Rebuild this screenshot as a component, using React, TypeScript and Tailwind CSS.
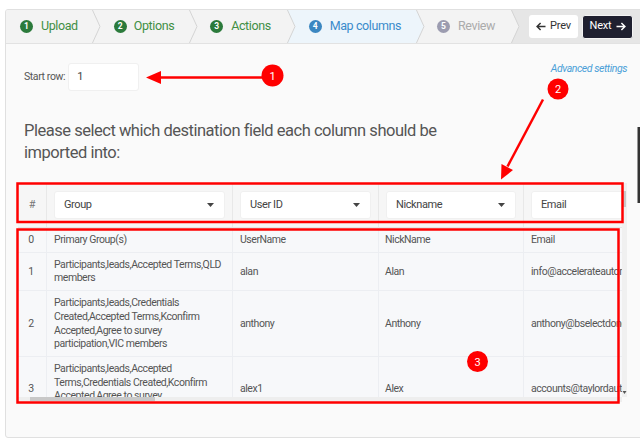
import React from 'react';

const Sep = ({ left, right }: { left: string; right: string }) => (
  <svg width="9" height="33" viewBox="0 0 9 33" className="block shrink-0">
    <rect x="0" y="0" width="9" height="33" fill={right} />
    <polygon points="0,0 8,16.5 0,33" fill={left} />
    <polyline points="0,-1 8,16.5 0,34" fill="none" stroke="#d4d4d4" strokeWidth="1" />
  </svg>
);

const Caret = () => (
  <svg width="7" height="4" viewBox="0 0 7 4" className="ml-auto block">
    <polygon points="0,0 7,0 3.5,4" fill="#444" />
  </svg>
);

const ArrowLeft = ({ color }: { color: string }) => (
  <svg width="10" height="9" viewBox="0 0 10 9" className="block">
    <path d="M9.5 4.5H1.2M4.6 1 1.1 4.5 4.6 8" fill="none" stroke={color} strokeWidth="1.5" />
  </svg>
);

const ArrowRight = ({ color }: { color: string }) => (
  <svg width="10" height="9" viewBox="0 0 10 9" className="block">
    <path d="M0.5 4.5H8.8M5.4 1 8.9 4.5 5.4 8" fill="none" stroke={color} strokeWidth="1.5" />
  </svg>
);

type Row = { n: string; g: string[]; u: string; nk: string; e: string };

const rows: Row[] = [
  { n: '0', g: ['Primary Group(s)'], u: 'UserName', nk: 'NickName', e: 'Email' },
  { n: '1', g: ['Participants,leads,Accepted Terms,QLD', 'members'], u: 'alan', nk: 'Alan', e: 'info@accelerateautomotive.com.au' },
  {
    n: '2',
    g: ['Participants,leads,Credentials', 'Created,Accepted Terms,Kconfirm', 'Accepted,Agree to survey', 'participation,VIC members'],
    u: 'anthony',
    nk: 'Anthony',
    e: 'anthony@bselectdoncaster.com.au',
  },
  {
    n: '3',
    g: ['Participants,leads,Accepted', 'Terms,Credentials Created,Kconfirm', 'Accepted,Agree to survey', 'participation,NSW members'],
    u: 'alex1',
    nk: 'Alex',
    e: 'accounts@taylordautomotive.com.au',
  },
];

export default function App() {
  return (
    <div className="relative h-[442px] w-[640px] overflow-hidden bg-white font-['Roboto',sans-serif]">
      <div className="ml-[5px] mt-[9px] flex h-[429px] w-[680px] flex-col overflow-hidden rounded-[3px] border border-[#e0e0e0] bg-[#fafafa]">
        {/* Steps bar */}
        <div className="flex h-[34px] shrink-0 border-b border-[#e2e2e2] bg-[#f3f3f3] text-[12.5px] tracking-[-0.4px]">
          <div className="flex h-[33px] items-center gap-[8px] pl-[14px] pr-[14px]">
            <span className="flex h-[13px] w-[13px] items-center justify-center rounded-full bg-[#2b7a3b] text-[8.5px] font-bold tracking-normal text-white">1</span>
            <span className="text-[#3f8f45]">Upload</span>
          </div>
          <Sep left="#f3f3f3" right="#f3f3f3" />
          <div className="flex h-[33px] items-center gap-[7px] pl-[13px] pr-[15px]">
            <span className="flex h-[13px] w-[13px] items-center justify-center rounded-full bg-[#2b7a3b] text-[8.5px] font-bold tracking-normal text-white">2</span>
            <span className="text-[#3f8f45]">Options</span>
          </div>
          <Sep left="#f3f3f3" right="#f3f3f3" />
          <div className="flex h-[33px] items-center gap-[8px] pl-[12px] pr-[16px]">
            <span className="flex h-[13px] w-[13px] items-center justify-center rounded-full bg-[#2b7a3b] text-[8.5px] font-bold tracking-normal text-white">3</span>
            <span className="text-[#3f8f45]">Actions</span>
          </div>
          <Sep left="#f3f3f3" right="#edf5fb" />
          <div className="flex h-[33px] items-center gap-[8px] bg-[#edf5fb] pl-[13px] pr-[15px]">
            <span className="flex h-[13px] w-[13px] items-center justify-center rounded-full bg-[#3b87c1] text-[8.5px] font-bold tracking-normal text-white">4</span>
            <span className="text-[#3a8bcb]">Map columns</span>
          </div>
          <Sep left="#edf5fb" right="#f3f3f3" />
          <div className="flex h-[33px] items-center gap-[8px] pl-[12px] pr-[16px]">
            <span className="flex h-[13px] w-[13px] items-center justify-center rounded-full bg-[#9c9cb0] text-[8.5px] font-bold tracking-normal text-white">5</span>
            <span className="text-[#ababab]">Review</span>
          </div>
          <Sep left="#f3f3f3" right="#e6e6e6" />
          <div className="flex h-[33px] flex-1 items-center gap-[4px] bg-[#e6e6e6] pl-[9px] tracking-[-0.2px]">
            <button className="flex h-[23px] w-[49px] items-center justify-center gap-[4px] rounded-[3px] bg-white text-[11px] text-[#333]">
              <ArrowLeft color="#333" />
              Prev
            </button>
            <button className="flex h-[24px] w-[51px] items-center justify-center gap-[4px] rounded-[3px] border border-[#f4f4f4] bg-[#1f2030] text-[11px] text-white">
              Next
              <ArrowRight color="#fff" />
            </button>
          </div>
        </div>

        {/* Body */}
        <div className="flex w-[621px] flex-col pl-[12px] pt-[19px]">
          <div className="flex items-start justify-between">
            <div className="flex items-center gap-[3px] pl-[6px]">
              <span className="text-[10.5px] tracking-[-0.4px] text-[#555]">Start row:</span>
              <div className="flex h-[28px] w-[71px] items-center rounded-[3px] border border-[#f0f0f0] bg-white pl-[8px] text-[11px] text-[#444]">1</div>
            </div>
            <span className="-mt-[2px] text-[10.5px] italic tracking-[-0.45px] text-[#4a9fd8]">Advanced settings</span>
          </div>

          <h2 className="mt-[29px] w-[426px] pl-[6px] text-[16.5px] leading-[22px] tracking-[-0.48px] text-[#555]">
            Please select which destination field each column should be imported into:
          </h2>

          {/* Table */}
          <div className="mt-[19px] flex w-[609px] flex-col">
            <div className="flex">
              <div className="flex h-[45px] w-[604px] overflow-hidden border-b border-[#e6e6e6] bg-[#f6f6f6] text-[11px] tracking-[-0.4px]">
                <div className="flex w-[28px] shrink-0 items-center justify-center text-[#777]">#</div>
                <div className="flex w-[186px] shrink-0 items-center border-l border-[#e8e8e8] px-[7px]">
                  <div className="flex h-[28px] w-full items-center rounded-[3px] border border-[#f0f0f0] bg-white pl-[9px] pr-[10px] text-[#444]">
                    Group
                    <Caret />
                  </div>
                </div>
                <div className="flex w-[146px] shrink-0 items-center border-l border-[#e8e8e8] px-[7px]">
                  <div className="flex h-[28px] w-full items-center rounded-[3px] border border-[#f0f0f0] bg-white pl-[9px] pr-[10px] text-[#444]">
                    User ID
                    <Caret />
                  </div>
                </div>
                <div className="flex w-[145px] shrink-0 items-center border-l border-[#e8e8e8] px-[7px]">
                  <div className="flex h-[28px] w-full items-center rounded-[3px] border border-[#f0f0f0] bg-white pl-[9px] pr-[10px] text-[#444]">
                    Nickname
                    <Caret />
                  </div>
                </div>
                <div className="flex w-[170px] shrink-0 items-center border-l border-[#e8e8e8] px-[7px]">
                  <div className="flex h-[28px] w-full items-center rounded-[3px] border border-[#f0f0f0] bg-white pl-[9px] pr-[10px] text-[#444]">
                    Email
                    <Caret />
                  </div>
                </div>
              </div>
              <div className="flex w-[5px] flex-col bg-[#f0f0f0] pt-[8px]">
                <div className="h-[16px] w-[4px] bg-[#c9c9c9]" />
              </div>
            </div>

            <div className="flex">
              <div className="h-[169px] w-[604px] overflow-hidden bg-[#f7f8fa]">
                {rows.map((r) => (
                  <div key={r.n} className="flex border-b border-[#eceef2] text-[10.5px] leading-[13.7px] tracking-[-0.45px] text-[#555]">
                    <div className="flex w-[28px] shrink-0 items-center justify-center py-[5px] pr-[2px]">{r.n}</div>
                    <div className="w-[186px] shrink-0 whitespace-nowrap border-l border-[#eceef2] px-[7px] py-[5px]">
                      {r.g.map((l, i) => (
                        <div key={i}>{l}</div>
                      ))}
                    </div>
                    <div className="flex w-[146px] shrink-0 items-center border-l border-[#eceef2] px-[7px] py-[5px]">{r.u}</div>
                    <div className="flex w-[145px] shrink-0 items-center border-l border-[#eceef2] px-[6px] py-[5px]">{r.nk}</div>
                    <div className="flex w-[170px] shrink-0 items-center whitespace-nowrap border-l border-[#eceef2] px-[7px] py-[5px]">{r.e}</div>
                  </div>
                ))}
              </div>
              <div className="relative w-[5px] bg-[#f0f0f0]">
                <svg width="5" height="4" viewBox="0 0 5 4" className="absolute bottom-[2px] left-0">
                  <polygon points="0.5,0 4.5,0 2.5,3" fill="#555" />
                </svg>
              </div>
            </div>
            <div className="flex h-[5px] w-[604px] bg-[#eeeeee] pl-[12px]">
              <div className="h-[4px] w-[125px] bg-[#c8c8c8]" />
            </div>
          </div>
        </div>
      </div>

      {/* Annotations */}
      <svg width="640" height="442" viewBox="0 0 640 442" className="pointer-events-none absolute left-0 top-0">
        <rect x="637.5" y="127" width="2.5" height="76" fill="#333" />
        <rect x="17.5" y="183.5" width="605" height="38.5" fill="none" stroke="#f00" strokeWidth="2.5" />
        <rect x="17.5" y="229.5" width="601" height="173" fill="none" stroke="#f00" strokeWidth="2.5" />
        <line x1="262" y1="77.5" x2="158" y2="77.5" stroke="#f00" strokeWidth="2.5" />
        <polygon points="146,77.5 161,71 161,84" fill="#f00" />
        <circle cx="272.5" cy="75.5" r="11" fill="#f00" />
        <text x="272.5" y="79.5" textAnchor="middle" fontSize="11" fill="#fff" fontFamily="Roboto, sans-serif">1</text>
        <line x1="543" y1="99.5" x2="507.5" y2="166.5" stroke="#f00" strokeWidth="2.5" />
        <polygon points="501,179.5 501.5,164 513,170" fill="#f00" />
        <circle cx="558" cy="89" r="10.5" fill="#f00" />
        <text x="558" y="93" textAnchor="middle" fontSize="11" fill="#fff" fontFamily="Roboto, sans-serif">2</text>
        <circle cx="477.5" cy="361.5" r="10.5" fill="#f00" />
        <text x="477.5" y="365.5" textAnchor="middle" fontSize="11" fill="#fff" fontFamily="Roboto, sans-serif">3</text>
      </svg>
    </div>
  );
}
